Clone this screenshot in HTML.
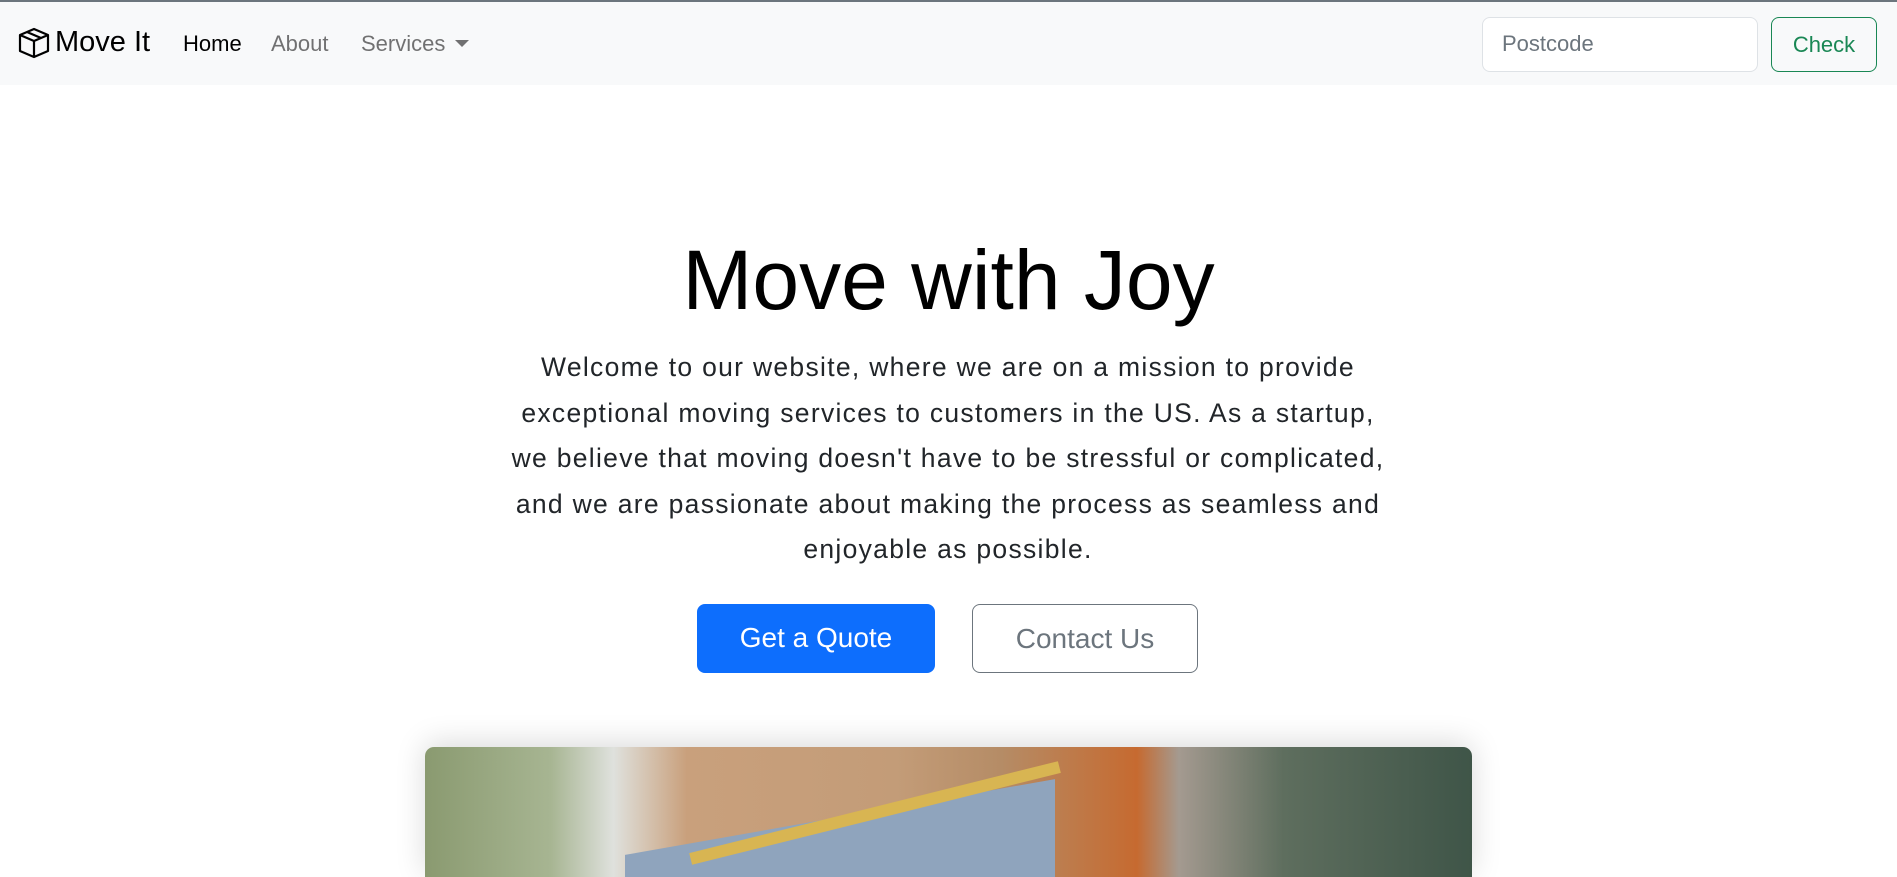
<!DOCTYPE html>
<html><head><meta charset="utf-8"><style>
*{box-sizing:border-box;margin:0;padding:0}
html,body{width:1897px;height:877px;overflow:hidden}
body{background:#fff;font-family:"Liberation Sans",sans-serif;color:#212529;position:relative}
.nav{position:absolute;left:0;top:0;width:1897px;height:85px;background:#f8f9fa;border-top:2px solid #6c757d}
.brand{position:absolute;left:17px;top:24px;font-size:29px;color:#000;display:flex;align-items:center;gap:4px}
.link{position:absolute;top:29px;font-size:22px;color:rgba(0,0,0,.55)}
.inp{position:absolute;left:1482px;top:15px;width:276px;height:55px;border:1px solid #dee2e6;border-radius:8px;background:#fff;font-size:22px;color:#6c757d;padding:13px 19px}
.chk{position:absolute;left:1771px;top:15px;width:106px;height:55px;border:1px solid #198754;border-radius:8px;color:#198754;font-size:22px;text-align:center;line-height:53px}
h1{position:absolute;left:0;width:1897px;top:230px;text-align:center;font-weight:400;font-size:84px;color:#000;line-height:100px}
p{position:absolute;left:448px;width:1000px;top:345px;text-align:center;font-size:26.5px;letter-spacing:1.3px;line-height:45.5px;white-space:nowrap}
.btn{position:absolute;top:604px;height:69px;border-radius:8px;font-size:28px;text-align:center;line-height:67px}
.img{position:absolute;left:425px;top:747px;width:1047px;height:130px;border-radius:9px 9px 0 0;overflow:hidden;box-shadow:0 -4px 30px rgba(0,0,0,.15);background:linear-gradient(90deg,#8a9a70 0%,#a7b592 12%,#dfe1dd 18%,#c9a07c 25%,#c39c78 45%,#b58c66 55%,#c66a30 68%,#a49a90 72%,#5e6e5e 82%,#3f5548 100%)}
</style></head><body>
<div class="nav">
<div class="brand"><svg width="34" height="32" viewBox="0 0 16 16" fill="none" stroke="#000" stroke-width="1.1" stroke-linejoin="round"><path d="M8 1 15 4v8L8 15 1 12V4z M1 4l7 3 7-3 M8 7v8 M4.5 2.5l7 3"/></svg>Move It</div>
<div class="link" style="left:183px;color:#000">Home</div>
<div class="link" style="left:271px">About</div>
<div class="link" style="left:361px">Services <span style="display:inline-block;width:0;height:0;border-left:7px solid transparent;border-right:7px solid transparent;border-top:7px solid rgba(0,0,0,.55);vertical-align:4px;margin-left:4px"></span></div>
<div class="inp">Postcode</div>
<div class="chk">Check</div>
</div>
<h1>Move with Joy</h1>
<p>Welcome to our website, where we are on a mission to provide<br>exceptional moving services to customers in the US. As a startup,<br>we believe that moving doesn't have to be stressful or complicated,<br>and we are passionate about making the process as seamless and<br>enjoyable as possible.</p>
<div class="btn" style="left:697px;width:238px;background:#0d6efd;color:#fff">Get a Quote</div>
<div class="btn" style="left:972px;width:226px;border:1px solid #6c757d;color:#6c757d">Contact Us</div>
<div class="img">
<div style="position:absolute;left:200px;top:70px;width:430px;height:100px;background:#8fa4bd;transform:skewY(-10deg)"></div>
<div style="position:absolute;left:260px;top:60px;width:380px;height:12px;background:#d8b552;transform:rotate(-14deg)"></div>
</div>
</body></html>
